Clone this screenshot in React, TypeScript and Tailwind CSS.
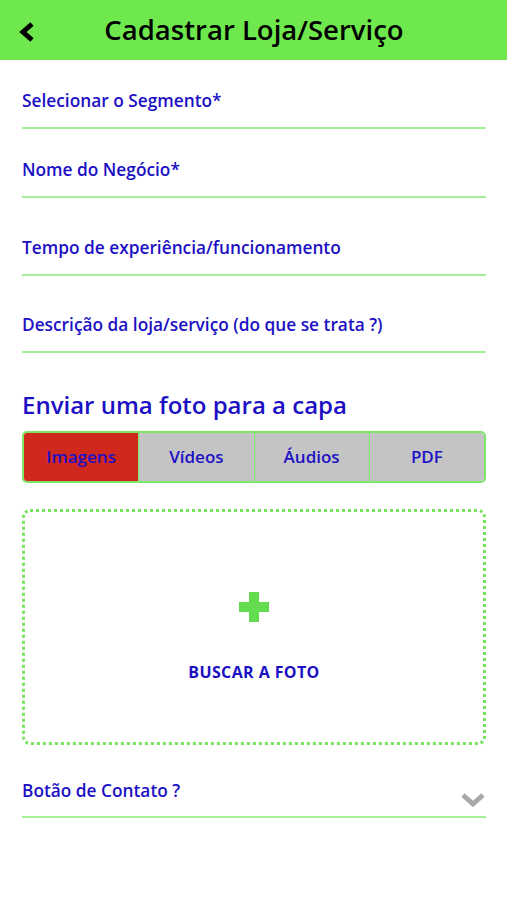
const FIELDS = [
  { label: "Selecionar o Segmento*", h: "h-[69px]" },
  { label: "Nome do Negócio*", h: "h-[69px]" },
  { label: "Tempo de experiência/funcionamento", h: "h-[78px]" },
  { label: "Descrição da loja/serviço (do que se trata ?)", h: "h-[77px]" },
];

const TABS = ["Imagens", "Vídeos", "Áudios", "PDF"];

export default function App() {
  return (
    <div className="w-[507px] h-[900px] bg-white font-['Open_Sans',sans-serif] text-[#1c10c4]">
      <header className="h-[60px] bg-[#6ee84c] flex items-center relative">
        <svg className="absolute left-[18px] top-[22px]" width="18" height="20" viewBox="0 0 18 20">
          <path d="M14 2 L5 10 L14 18" fill="none" stroke="#000" strokeWidth="5" strokeLinejoin="miter" />
        </svg>
        <h1 className="w-full text-center pl-[1px] text-[27.5px] font-semibold text-black leading-none">
          Cadastrar Loja/Serviço
        </h1>
      </header>

      <div className="px-[22px] pr-[21px]">
        {FIELDS.map((f) => (
          <div key={f.label} className={`${f.h} flex items-end border-b-2 border-[#a4f096]`}>
            <span className="text-[17.3px] font-semibold leading-none pb-[18px]">{f.label}</span>
          </div>
        ))}

        <h2 className="mt-[40px] text-[24px] font-semibold leading-none">Enviar uma foto para a capa</h2>

        <div className="mt-[14px] h-[52px] flex border-2 border-[#7ce868] rounded-[5px] overflow-hidden">
          {TABS.map((t, i) => (
            <div
              key={t}
              className={`flex-1 flex items-center justify-center text-[17px] font-semibold ${
                i === 0 ? "bg-[#d0281c]" : "bg-[#c4c4c4] border-l border-[#7ce868]"
              }`}
            >
              {t}
            </div>
          ))}
        </div>

        <div className="mt-[26px] h-[236px] pt-[22px] border-[3px] border-dotted border-[#74e45a] rounded-[8px] flex flex-col items-center justify-center">
          <svg width="30" height="30" viewBox="0 0 30 30">
            <rect x="10" y="0" width="10" height="30" fill="#64dc50" />
            <rect x="0" y="10" width="30" height="10" fill="#64dc50" />
          </svg>
          <span className="mt-[38px] text-[16px] font-bold tracking-wide">BUSCAR A FOTO</span>
        </div>

        <div className="h-[73px] flex items-end justify-between border-b-2 border-[#a4f096]">
          <span className="text-[17.3px] font-semibold leading-none pb-[17px]">Botão de Contato ?</span>
          <svg className="mb-[8px]" width="26" height="16" viewBox="0 0 26 16">
            <path d="M3 3 L13 12 L23 3" fill="none" stroke="#a8a8a8" strokeWidth="5" />
          </svg>
        </div>
      </div>
    </div>
  );
}
